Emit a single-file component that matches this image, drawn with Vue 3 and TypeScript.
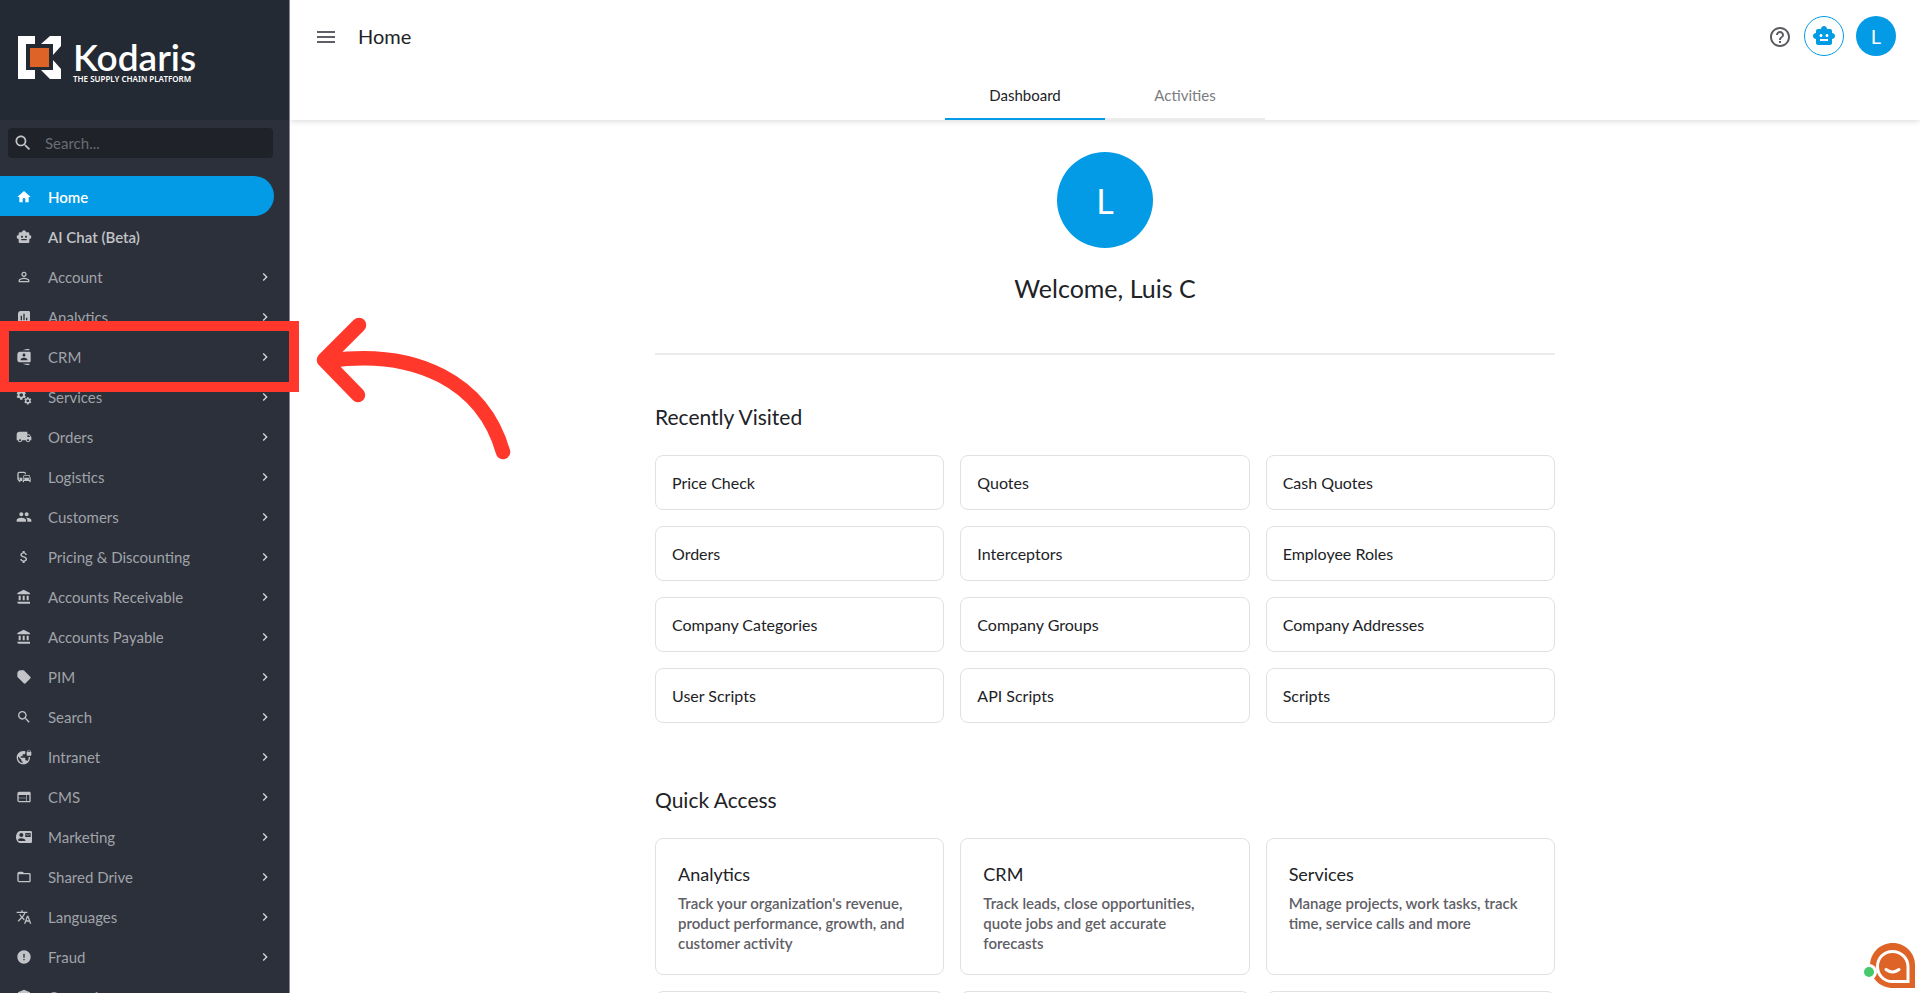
<script setup lang="ts">
import { ref } from 'vue'

interface NavItem {
  label: string
  icon: string
  strong?: boolean
  leaf?: boolean
}

interface QuickLink {
  title: string
  text: string
}

const icons: Record<string, string> = {
  home: 'M10 20v-6h4v6h5v-8h3L12 3 2 12h3v8z',
  robot:
    'M20 9V7c0-1.1-.9-2-2-2h-3c0-1.66-1.34-3-3-3S9 3.34 9 5H6c-1.1 0-2 .9-2 2v2c-1.66 0-3 1.34-3 3s1.34 3 3 3v4c0 1.1.9 2 2 2h12c1.1 0 2-.9 2-2v-4c1.66 0 3-1.34 3-3s-1.34-3-3-3zM7.5 11.5c0-.83.67-1.5 1.5-1.5s1.5.67 1.5 1.5S9.83 13 9 13s-1.5-.67-1.5-1.5zM16 17H8v-2h8v2zm-1-4c-.83 0-1.5-.67-1.5-1.5S14.17 10 15 10s1.5.67 1.5 1.5S15.83 13 15 13z',
  person:
    'M12 5.9c1.16 0 2.1.94 2.1 2.1s-.94 2.1-2.1 2.1S9.9 9.16 9.9 8s.94-2.1 2.1-2.1m0 9c2.97 0 6.1 1.46 6.1 2.1v1.1H5.9V17c0-.64 3.13-2.1 6.1-2.1M12 4C9.79 4 8 5.79 8 8s1.79 4 4 4 4-1.79 4-4-1.79-4-4-4zm0 9c-2.67 0-8 1.34-8 4v3h16v-3c0-2.66-5.33-4-8-4z',
  chart:
    'M19 3H7C4.8 3 3 4.8 3 7v12c0 1.1.9 2 2 2h14c1.1 0 2-.9 2-2V5c0-1.1-.9-2-2-2zM9 17H7v-7h2v7zm4 0h-2V7h2v10zm4 0h-2v-4h2v4z',
  contacts:
    'M20 0h-4l-6 2h10V0zM10 22l6 2h4v-2H10zM20 4H6C3.8 4 2 5.8 2 8v8c0 2.2 1.8 4 4 4h14c1.1 0 2-.9 2-2V6c0-1.1-.9-2-2-2zm-8 2.75c1.24 0 2.25 1.01 2.25 2.25s-1.01 2.25-2.25 2.25S9.75 10.24 9.75 9 10.76 6.75 12 6.75zM17 17H7v-1.5c0-1.67 3.33-2.5 5-2.5s5 .83 5 2.5V17z',
  gear:
    'M19.14 12.94c.04-.3.06-.61.06-.94 0-.32-.02-.64-.07-.94l2.03-1.58c.18-.14.23-.41.12-.61l-1.92-3.32c-.12-.22-.37-.29-.59-.22l-2.39.96c-.5-.38-1.03-.7-1.62-.94l-.36-2.54c-.04-.24-.24-.41-.48-.41h-3.84c-.24 0-.43.17-.47.41l-.36 2.54c-.59.24-1.13.57-1.62.94l-2.39-.96c-.22-.08-.47 0-.59.22L2.74 8.87c-.12.21-.08.47.12.61l2.03 1.58c-.05.3-.09.63-.09.94s.02.64.07.94l-2.03 1.58c-.18.14-.23.41-.12.61l1.92 3.32c.12.22.37.29.59.22l2.39-.96c.5.38 1.03.7 1.62.94l.36 2.54c.05.24.24.41.48.41h3.84c.24 0 .44-.17.47-.41l.36-2.54c.59-.24 1.13-.56 1.62-.94l2.39.96c.22.08.47 0 .59-.22l1.92-3.32c.12-.22.07-.47-.12-.61l-2.01-1.58zM12 15.6c-1.98 0-3.6-1.62-3.6-3.6s1.62-3.6 3.6-3.6 3.6 1.62 3.6 3.6-1.62 3.6-3.6 3.6z',
  truck:
    'M20 8h-3V4H5C2.8 4 1 5.8 1 8v9h2c0 1.66 1.34 3 3 3s3-1.34 3-3h6c0 1.66 1.34 3 3 3s3-1.34 3-3h2v-5l-3-4zM6 18.5c-.83 0-1.5-.67-1.5-1.5s.67-1.5 1.5-1.5 1.5.67 1.5 1.5-.67 1.5-1.5 1.5zm13.5-9l1.96 2.5H17V9.5h2.5zm-1.5 9c-.83 0-1.5-.67-1.5-1.5s.67-1.5 1.5-1.5 1.5.67 1.5 1.5-.67 1.5-1.5 1.5z',
  commute:
    'M12 4H5C3.34 4 2 5.34 2 7v8c0 1.66 1.34 3 3 3l-1 1v1h1l2-2.03L9 18v-5H4V5.98L13 6v2h2V7c0-1.66-1.34-3-3-3zM5 14c.55 0 1 .45 1 1s-.45 1-1 1-1-.45-1-1 .45-1 1-1zm15.57-4.34c-.14-.4-.52-.66-.97-.66h-7.19c-.46 0-.83.26-.98.66L10 13.77l.01 5.51c0 .38.31.72.69.72h.62c.38 0 .68-.38.68-.76V18h8v1.24c0 .38.31.76.69.76h.61c.38 0 .69-.34.69-.72l.01-1.37v-4.14l-1.43-4.11zM12.41 10h7.19l1.03 3h-9.25l1.03-3zM12 16c-.55 0-1-.45-1-1s.45-1 1-1 1 .45 1 1-.45 1-1 1zm8 0c-.55 0-1-.45-1-1s.45-1 1-1 1 .45 1 1-.45 1-1 1z',
  people:
    'M16 11c1.66 0 2.99-1.34 2.99-3S17.66 5 16 5c-1.66 0-3 1.34-3 3s1.34 3 3 3zm-8 0c1.66 0 2.99-1.34 2.99-3S9.66 5 8 5C6.34 5 5 6.34 5 8s1.34 3 3 3zm0 2c-2.33 0-7 1.17-7 3.5V19h14v-2.5c0-2.33-4.67-3.5-7-3.5zm8 0c-.29 0-.62.02-.97.05 1.16.84 1.97 1.97 1.97 3.45V19h6v-2.5c0-2.33-4.67-3.5-7-3.5z',
  dollar:
    'M11.8 10.9c-2.27-.59-3-1.2-3-2.15 0-1.09 1.01-1.85 2.7-1.85 1.78 0 2.44.85 2.5 2.1h2.21c-.07-1.72-1.12-3.3-3.21-3.81V3h-3v2.16c-1.94.42-3.5 1.68-3.5 3.61 0 2.31 1.91 3.46 4.7 4.13 2.5.6 3 1.48 3 2.41 0 .69-.49 1.79-2.7 1.79-2.06 0-2.87-.92-2.98-2.1h-2.2c.12 2.19 1.76 3.42 3.68 3.83V21h3v-2.15c1.95-.37 3.5-1.5 3.5-3.55 0-2.84-2.43-3.81-4.7-4.4z',
  bank: 'M4 10v7h3v-7H4zm6 0v7h3v-7h-3zM4 22h17v-3H2v1c0 1.1.9 2 2 2zm12-12v7h3v-7h-3zm-4.5-9L2 6v2h19V6l-9.5-5z',
  tag: 'M21.41 11.58l-9-9C12.05 2.22 11.55 2 11 2H7C4 2 2 4 2 7v4c0 .55.22 1.05.59 1.42l9 9c.36.36.86.58 1.41.58.55 0 1.05-.22 1.41-.59l7-7c.37-.36.59-.86.59-1.41 0-.55-.23-1.06-.59-1.42z',
  search:
    'M15.5 14h-.79l-.28-.27C15.41 12.59 16 11.11 16 9.5 16 5.91 13.09 3 9.5 3S3 5.91 3 9.5 5.91 16 9.5 16c1.61 0 3.09-.59 4.23-1.57l.27.28v.79l5 4.99L20.49 19l-4.99-5zm-6 0C7.01 14 5 11.99 5 9.5S7.01 5 9.5 5 14 7.01 14 9.5 11.99 14 9.5 14z',
  globe:
    'M22 4v-.5C22 2.12 20.88 1 19.5 1S17 2.12 17 3.5V4c-.55 0-1 .45-1 1v4c0 .55.45 1 1 1h5c.55 0 1-.45 1-1V5c0-.55-.45-1-1-1zm-.8 0h-3.4v-.5c0-.94.76-1.7 1.7-1.7s1.7.76 1.7 1.7V4zm-2.28 8c.04.33.08.66.08 1 0 2.08-.8 3.97-2.1 5.39-.26-.81-1-1.39-1.9-1.39h-1v-3c0-.55-.45-1-1-1H7v-2h2c.55 0 1-.45 1-1V8h2c1.1 0 2-.9 2-2V3.46c-.95-.3-1.95-.46-3-.46C5.48 3 1 7.48 1 13s4.48 10 10 10 10-4.48 10-10c0-.34-.02-.67-.05-1h-2.03zM10 20.93c-3.95-.49-7-3.85-7-7.93 0-.62.08-1.21.21-1.79L8 16v1c0 1.1.9 2 2 2v1.93z',
  web: 'M20 4H5C3.3 4 2.01 5.3 2.01 7L2 17c0 1.7 1.3 3 3 3h15c1.1 0 2-.9 2-2V6c0-1.1-.9-2-2-2zm-5 14H4v-4h11v4zm0-5H4V9h11v4zm5 5h-4V9h4v9z',
  mail: 'M21 8V7l-3 2-3-2v1l3 2 3-2zm1-5H7C3 3 0 7 0 12s3 9 7 9h15c1.1 0 1.99-.9 1.99-2L24 5c0-1.1-.9-2-2-2zM8 6c1.66 0 3 1.34 3 3s-1.34 3-3 3-3-1.34-3-3 1.34-3 3-3zm6 12H6c-2 0-3-1-3-2 1-1.4 3.5-2.1 5-2.1 2 0 6 1.1 6 3.1v1zm8-6h-8V6h8v6z',
  folder:
    'M20 6h-8l-2-2H5C3.3 4 2 5.3 2 7v10c0 1.7 1.3 3 3 3h15c1.1 0 2-.9 2-2V8c0-1.1-.9-2-2-2zm0 12H4V8h16v10z',
  translate:
    'M12.87 15.07l-2.54-2.51.03-.03c1.74-1.94 2.98-4.17 3.71-6.53H17V4h-7V2H8v2H1v1.99h11.17C11.5 7.92 10.44 9.75 9 11.35 8.07 10.32 7.3 9.19 6.69 8h-2c.73 1.63 1.73 3.17 2.98 4.56l-5.09 5.02L4 19l5-5 3.11 3.11.76-2.04zM18.5 10h-2L12 22h2l1.12-3h4.75L21 22h2l-4.5-12zm-2.62 7l1.62-4.33L19.12 17h-3.24z',
  alert: 'M12 2C6.48 2 2 6.48 2 12s4.48 10 10 10 10-4.48 10-10S17.52 2 12 2zm1 15h-2v-2h2v2zm0-4h-2V7h2v6z',
  shield: 'M12 1L3 5v6c0 5.55 3.84 10.74 9 12 5.16-1.26 9-6.45 9-12V5l-9-4z',
  chevron: 'M10 6L8.59 7.41 13.17 12l-4.58 4.59L10 18l6-6z',
  help: 'M11 18h2v-2h-2v2zm1-16C6.48 2 2 6.48 2 12s4.48 10 10 10 10-4.48 10-10S17.52 2 12 2zm0 18c-4.41 0-8-3.59-8-8s3.59-8 8-8 8 3.59 8 8-3.59 8-8 8zm0-14c-2.21 0-4 1.79-4 4h2c0-1.1.9-2 2-2s2 .9 2 2c0 2-3 1.75-3 5h2c0-2.25 3-2.5 3-5 0-2.21-1.79-4-4-4z',
}

const nav: NavItem[] = [
  { label: 'Home', icon: 'home', strong: true, leaf: true },
  { label: 'AI Chat (Beta)', icon: 'robot', strong: true, leaf: true },
  { label: 'Account', icon: 'person' },
  { label: 'Analytics', icon: 'chart' },
  { label: 'CRM', icon: 'contacts' },
  { label: 'Services', icon: 'gears' },
  { label: 'Orders', icon: 'truck' },
  { label: 'Logistics', icon: 'commute' },
  { label: 'Customers', icon: 'people' },
  { label: 'Pricing & Discounting', icon: 'dollar' },
  { label: 'Accounts Receivable', icon: 'bank' },
  { label: 'Accounts Payable', icon: 'bank' },
  { label: 'PIM', icon: 'tag' },
  { label: 'Search', icon: 'search' },
  { label: 'Intranet', icon: 'globe' },
  { label: 'CMS', icon: 'web' },
  { label: 'Marketing', icon: 'mail' },
  { label: 'Shared Drive', icon: 'folder' },
  { label: 'Languages', icon: 'translate' },
  { label: 'Fraud', icon: 'alert' },
  { label: 'Operations', icon: 'shield' },
]

const recent: string[] = [
  'Price Check', 'Quotes', 'Cash Quotes',
  'Orders', 'Interceptors', 'Employee Roles',
  'Company Categories', 'Company Groups', 'Company Addresses',
  'User Scripts', 'API Scripts', 'Scripts',
]

const quick: QuickLink[] = [
  { title: 'Analytics', text: "Track your organization's revenue, product performance, growth, and customer activity" },
  { title: 'CRM', text: 'Track leads, close opportunities, quote jobs and get accurate forecasts' },
  { title: 'Services', text: 'Manage projects, work tasks, track time, service calls and more' },
  { title: 'Orders', text: 'Manage orders' },
  { title: 'Logistics', text: 'Manage deliveries' },
  { title: 'Customers', text: 'Manage customers' },
]

const tabs: string[] = ['Dashboard', 'Activities']
const activeTab = ref('Dashboard')
const activeNav = ref('Home')
const query = ref('')
</script>

<template>
  <div class="app">
    <aside class="sidebar">
      <div class="brand">
        <svg class="brand-mark" viewBox="0 0 43 43" aria-hidden="true">
          <path d="M0 0h17v8H8v26h9v9H0z" fill="#fff" />
          <path d="M32 0h11v10l-8 9V8H23z" fill="#fff" />
          <path d="M35 24l8 9v10H32l-9-9h12z" fill="#fff" />
          <rect x="12" y="12" width="19" height="19" fill="#dd6327" />
        </svg>
        <div class="brand-text">
          <span class="brand-name">Kodaris</span>
          <span class="brand-tag">THE SUPPLY CHAIN PLATFORM</span>
        </div>
      </div>
      <label class="search">
        <svg viewBox="0 0 24 24" aria-hidden="true"><path :d="icons.search" /></svg>
        <input v-model="query" type="text" placeholder="Search..." aria-label="Search" />
      </label>
      <nav class="nav">
        <a
          v-for="item in nav"
          :key="item.label"
          href="#"
          class="nav-item"
          :class="{ strong: item.strong, active: item.label === activeNav }"
          @click.prevent="activeNav = item.label"
        >
          <svg class="nav-icon" viewBox="0 0 24 24" aria-hidden="true">
            <template v-if="item.icon === 'gears'">
              <path :d="icons.gear" transform="translate(-1 0) scale(.74)" />
              <path :d="icons.gear" transform="translate(11 11) scale(.56)" />
            </template>
            <path v-else :d="icons[item.icon]" />
          </svg>
          <span class="nav-label">{{ item.label }}</span>
          <svg v-if="!item.leaf" class="nav-chevron" viewBox="0 0 24 24" aria-hidden="true">
            <path :d="icons.chevron" />
          </svg>
        </a>
      </nav>
    </aside>

    <div class="page">
      <header class="header">
        <div class="toolbar">
          <button class="menu" type="button" aria-label="Toggle menu">
            <svg viewBox="0 0 18 14" aria-hidden="true">
              <path d="M0 3h18M0 8h18M0 13h18" stroke="#605f66" stroke-width="2" />
            </svg>
          </button>
          <h1>Home</h1>
          <div class="tools">
            <button class="help" type="button" aria-label="Help">
              <svg viewBox="0 0 24 24" aria-hidden="true"><path :d="icons.help" /></svg>
            </button>
            <button class="round outline" type="button" aria-label="AI assistant">
              <svg viewBox="0 0 24 24" aria-hidden="true"><path :d="icons.robot" /></svg>
            </button>
            <button class="round filled" type="button" aria-label="Profile">L</button>
          </div>
        </div>
        <div class="tabs" role="tablist">
          <button
            v-for="tab in tabs"
            :key="tab"
            type="button"
            role="tab"
            class="tab"
            :class="{ active: tab === activeTab }"
            :aria-selected="tab === activeTab"
            @click="activeTab = tab"
          >
            {{ tab }}
          </button>
        </div>
      </header>

      <main class="content">
        <div class="avatar">L</div>
        <p class="welcome">Welcome, Luis C</p>
        <hr />
        <h2>Recently Visited</h2>
        <div class="grid">
          <a v-for="name in recent" :key="name" href="#" class="recent">{{ name }}</a>
        </div>
        <h2 class="second">Quick Access</h2>
        <div class="grid">
          <a v-for="link in quick" :key="link.title" href="#" class="quick">
            <h3>{{ link.title }}</h3>
            <p>{{ link.text }}</p>
          </a>
        </div>
      </main>
    </div>

    <div class="highlight" aria-hidden="true"></div>
    <svg class="arrow" viewBox="0 0 196 144" aria-hidden="true">
      <path
        d="M43 9L8 44l34 35M14 44.500C100 33 167 66 187 136"
        fill="none"
        stroke="#ff382b"
        stroke-width="14.500"
        stroke-linecap="round"
        stroke-linejoin="round"
      />
    </svg>

    <button class="chat" type="button" aria-label="Open chat">
      <svg viewBox="0 0 56 50" aria-hidden="true">
        <path d="M33 3C20 3 10 13 10 25.500S20 48 33 48h22V25C55 13 45 3 33 3z" fill="#dd6327" />
        <path d="M32.500 11.500c-8.500 0-15 6.500-15 15s6.500 15 15 15H48v-15c0-8.500-7-15-15.500-15z" fill="none" stroke="#fff" stroke-width="3" />
        <path d="M26 29.500q6.500 5 13 0" fill="none" stroke="#fff" stroke-width="3" stroke-linecap="round" />
        <circle cx="9" cy="32" r="8" fill="#fff" />
        <circle cx="9" cy="32" r="5" fill="#46c96b" />
      </svg>
    </button>
  </div>
</template>

<style>
body {
  margin: 0;
  overflow: hidden;
}
</style>

<style scoped>
.app {
  position: relative;
  display: flex;
  height: 100vh;
  overflow: hidden;
  background: #fff;
  color: #212226;
  font-family: Lato, "Open Sans", sans-serif;
  font-size: 15px;
}

* {
  box-sizing: border-box;
}

button {
  padding: 0;
  border: 0;
  background: none;
  color: inherit;
  font: inherit;
  cursor: pointer;
}

a {
  color: inherit;
  text-decoration: none;
}

svg {
  display: block;
  fill: currentColor;
}

h1,
h2,
h3,
p {
  margin: 0;
  font-weight: 400;
}

.sidebar {
  flex: 0 0 290px;
  display: flex;
  flex-direction: column;
  overflow: hidden;
  border-right: 1px solid #85868e;
  background: #2b303b;
  color: #a1a3a8;
}

.brand {
  flex: 0 0 120px;
  display: flex;
  align-items: center;
  gap: 12px;
  padding: 0 18px 6px;
  background: #242a33;
  color: #fff;
}

.brand-mark {
  width: 43px;
  height: 43px;
}

.brand-text {
  display: flex;
  flex-direction: column;
  padding-top: 8px;
}

.brand-name {
  font-size: 37px;
  font-weight: 600;
  line-height: 34px;
}

.brand-tag {
  font-family: "Noto Sans", sans-serif;
  font-size: 8px;
  font-weight: 600;
  line-height: 9px;
  white-space: nowrap;
}

.search {
  flex: none;
  display: flex;
  align-items: center;
  gap: 12px;
  height: 30px;
  margin: 8px 16px 18px 8px;
  padding-left: 5px;
  border-radius: 4px;
  background: #1f2229;
  color: #c3c4c6;
}

.search svg {
  width: 20px;
  height: 20px;
}

.search input {
  flex: 1;
  min-width: 0;
  padding: 0;
  border: 0;
  outline: 0;
  background: none;
  color: #c3c4c6;
  font: inherit;
}

.search input::placeholder {
  color: #6a6c71;
  opacity: 1;
}

.nav {
  display: flex;
  flex-direction: column;
}

.nav-item {
  flex: 0 0 40px;
  display: flex;
  align-items: center;
  margin-right: 15px;
  padding: 1px 1px 0 16px;
  border-radius: 0 20px 20px 0;
}

.nav-item.strong {
  color: #c3c4c6;
  font-weight: 600;
}

.nav-item.active {
  background: #039be5;
  color: #fff;
}

.nav-icon {
  width: 16px;
  height: 16px;
  color: #c3c4c8;
}

.active .nav-icon {
  color: #fff;
}

.nav-label {
  flex: 1;
  padding-left: 16px;
}

.nav-chevron {
  width: 16px;
  height: 16px;
  color: #d5d6d8;
}

.page {
  flex: 1;
  min-width: 0;
  display: flex;
  flex-direction: column;
}

.header {
  flex: none;
  box-shadow: 0 1px 6px rgba(0, 0, 0, 0.16);
  clip-path: inset(0 0 -10px 0);
}

.toolbar {
  display: flex;
  align-items: center;
  height: 72px;
  padding: 0 24px 0 27px;
}

.menu svg {
  width: 18px;
  height: 14px;
}

h1 {
  margin-left: 23px;
  font-size: 20px;
}

.tools {
  display: flex;
  align-items: center;
  margin-left: auto;
}

.help {
  margin-right: 12px;
  padding-top: 2px;
  color: #5b5c62;
}

.help svg {
  width: 24px;
  height: 24px;
}

.round {
  display: flex;
  align-items: center;
  justify-content: center;
  width: 40px;
  height: 40px;
  border-radius: 50%;
  font-size: 20px;
}

.outline {
  margin-right: 12px;
  border: 1px solid #039be5;
  color: #039be5;
}

.outline svg {
  width: 24px;
  height: 24px;
}

.filled {
  background: #039be5;
  color: #fff;
}

.tabs {
  display: flex;
  justify-content: center;
  height: 48px;
}

.tab {
  width: 160px;
  border-bottom: 2px solid #ececec;
  color: #7c7c80;
}

.tab.active {
  border-bottom-color: #039be5;
  color: #212226;
}

.content {
  width: 900px;
  max-width: 100%;
  margin: 0 auto;
  padding-top: 32px;
}

.avatar {
  display: flex;
  align-items: center;
  justify-content: center;
  width: 96px;
  height: 96px;
  margin: 0 auto;
  border-radius: 50%;
  background: #039be5;
  color: #fff;
  font-size: 34px;
}

.welcome {
  margin-top: 23px;
  font-size: 25px;
  line-height: 34px;
  text-align: center;
}

hr {
  height: 2px;
  margin: 48px 0 0;
  border: 0;
  background: #ebebeb;
}

h2 {
  margin: 50px 0 26px;
  font-size: 21px;
  line-height: 24px;
}

h2.second {
  margin-top: 65px;
}

.grid {
  display: grid;
  grid-template-columns: repeat(3, 1fr);
  gap: 16px;
}

.recent,
.quick {
  border: 1px solid #e0e1e4;
  border-radius: 8px;
}

.recent {
  display: flex;
  align-items: center;
  height: 55px;
  padding: 0 16px;
  font-size: 16px;
}

.quick {
  height: 137px;
  padding: 24px 22px;
}

.quick h3 {
  margin-bottom: 8px;
  font-size: 18px;
  line-height: 22px;
}

.quick p {
  color: #5f6066;
  font-size: 15px;
  font-weight: 600;
  line-height: 20px;
}

.highlight {
  position: absolute;
  top: 321px;
  left: -1px;
  width: 300px;
  height: 71px;
  border: 10px solid #ff382b;
  pointer-events: none;
}

.arrow {
  position: absolute;
  top: 316px;
  left: 316px;
  width: 196px;
  height: 144px;
  overflow: visible;
  pointer-events: none;
}

.chat {
  position: absolute;
  right: 4px;
  bottom: 3px;
}

.chat svg {
  width: 56px;
  height: 50px;
}
</style>
